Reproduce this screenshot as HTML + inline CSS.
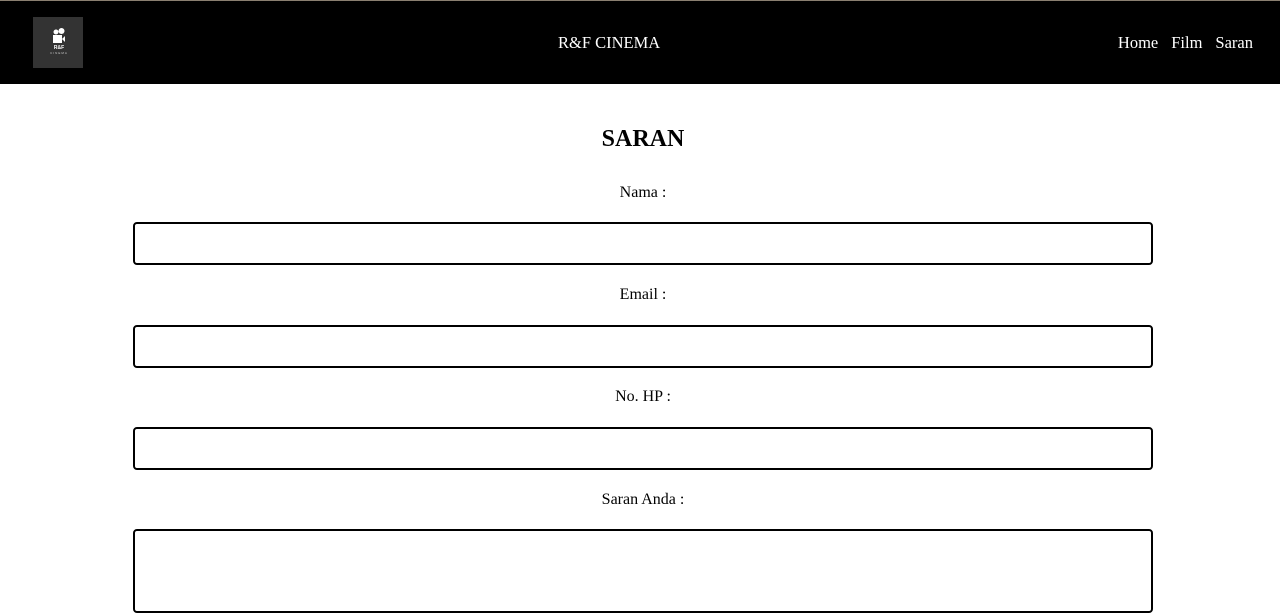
<!DOCTYPE html>
<html><head><style>
html,body{margin:0;background:#fff;font-family:"Liberation Serif",serif;width:1280px;height:591px;overflow:hidden}
.nav{position:absolute;top:0;left:0;width:1280px;height:84px;background:#000;border-top:1px solid #8a7f70;box-sizing:border-box}
.logo{position:absolute;left:33px;top:16px;width:50px;height:51px;background:#333}
.title{position:absolute;left:558px;top:32px;color:#fff;font-size:16.5px}
.links{position:absolute;right:27px;top:32px;color:#fff;font-size:16.5px}
.links span{margin-left:13px}
h1{position:absolute;top:126px;left:3px;width:1280px;text-align:center;margin:0;font-size:24px;font-weight:bold}
.lbl{position:absolute;left:3px;width:1280px;text-align:center;font-size:16px}
.box{position:absolute;left:133px;width:1016px;height:39px;border:2px solid #000;border-radius:4px}
</style></head><body>
<div class="nav">
<div class="logo">
<svg width="50" height="51" viewBox="0 0 50 51">
<circle cx="23" cy="15" r="2.5" fill="#fff"/><circle cx="28.5" cy="14" r="3" fill="#fff"/>
<rect x="20" y="18" width="9" height="8" fill="#fff"/><polygon points="29,22 32,19 32,25" fill="#fff"/>
<text x="26" y="32" font-size="5" fill="#fff" text-anchor="middle" font-family="Liberation Sans" font-weight="bold">R&amp;F</text>
<text x="26" y="37" font-size="3" fill="#ccc" text-anchor="middle" font-family="Liberation Sans" letter-spacing="1">CINEMA</text>
</svg></div>
<div class="title">R&amp;F CINEMA</div>
<div class="links"><span>Home</span><span>Film</span><span>Saran</span></div>
</div>
<h1>SARAN</h1>
<div class="lbl" style="top:184px">Nama :</div>
<div class="box" style="top:222px"></div>
<div class="lbl" style="top:286px">Email :</div>
<div class="box" style="top:325px"></div>
<div class="lbl" style="top:388px">No. HP :</div>
<div class="box" style="top:427px"></div>
<div class="lbl" style="top:491px">Saran Anda :</div>
<div class="box" style="top:529px;height:80px"></div>
</body></html>
